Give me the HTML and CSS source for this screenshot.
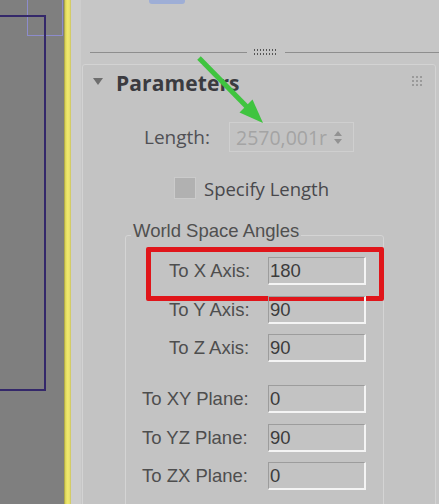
FILE: index.html
```html
<!DOCTYPE html>
<html>
<head>
<meta charset="utf-8">
<link rel="stylesheet" href="styles.css">
</head>
<body>
<div class="viewport">
  <div class="hover-box"></div>
  <div class="sel-box"></div>
</div>
<div class="divider"></div>
<div class="panel">
  <div class="strip"></div>
  <div class="main">
    <div class="top">
      <div class="blue-btn"></div>
      <div class="sep">
        <div class="sep-line short"></div>
        <div class="sep-grip"><div class="dots"></div><div class="dots"></div></div>
        <div class="sep-line"></div>
      </div>
    </div>
    <div class="rollout">
      <div class="ro-head">
        <div class="tri"></div>
        <div class="ro-title">Parameters</div>
        <div class="ro-grip">
          <span></span><span></span><span></span>
          <span></span><span></span><span></span>
          <span></span><span></span><span></span>
        </div>
      </div>
      <div class="len-row">
        <div class="len-label">Length:</div>
        <div class="spinner">
          <span class="spin-val">2570,001r</span>
          <span class="spin-arrows"><span class="up"></span><span class="down"></span></span>
        </div>
      </div>
      <div class="chk-row">
        <div class="chk"></div>
        <div class="chk-label">Specify Length</div>
      </div>
      <fieldset class="group">
        <legend>World Space Angles</legend>
        <div class="rows axis">
          <div class="row hl"><div class="lbl">To X Axis:</div><div class="box">180</div><div class="red-mark"></div></div>
          <div class="row"><div class="lbl">To Y Axis:</div><div class="box">90</div></div>
          <div class="row"><div class="lbl">To Z Axis:</div><div class="box">90</div></div>
        </div>
        <div class="rows plane">
          <div class="row"><div class="lbl">To XY Plane:</div><div class="box">0</div></div>
          <div class="row"><div class="lbl">To YZ Plane:</div><div class="box">90</div></div>
          <div class="row"><div class="lbl">To ZX Plane:</div><div class="box">0</div></div>
        </div>
      </fieldset>
    </div>
  </div>
</div>
<svg class="arrow" width="439" height="504" viewBox="0 0 439 504">
  <line x1="199" y1="58" x2="248" y2="108" stroke="#3fc43f" stroke-width="5"/>
  <polygon points="263,123 239.5,112.5 252.5,99.5" fill="#3fc43f"/>
</svg>
</body>
</html>
```
FILE: styles.css
```css
html, body {
  margin: 0;
  padding: 0;
}
body {
  width: 439px;
  height: 504px;
  overflow: hidden;
  display: flex;
  position: relative;
  font-family: "Liberation Sans", Arial, sans-serif;
  background: #c5c5c5;
}
.viewport {
  width: 64px;
  flex: none;
  background: #7f7f7f;
  position: relative;
  overflow: hidden;
}
.hover-box {
  position: absolute;
  left: 27px;
  top: -4px;
  width: 34px;
  height: 38px;
  border: 1px solid #8d8ccc;
}
.sel-box {
  position: absolute;
  left: -4px;
  top: 15px;
  width: 46px;
  height: 372px;
  border: 2px solid #34286a;
}
.divider {
  width: 7px;
  flex: none;
  background: linear-gradient(to right, #9a9440 0, #d9d25a 20%, #efe86c 45%, #ece46a 75%, #c9c267 100%);
}
.panel {
  flex: 1;
  display: flex;
}
.strip {
  width: 10px;
  flex: none;
  background: #cdcdcd;
}
.main {
  flex: 1;
  display: flex;
  flex-direction: column;
  background: #c6c6c6;
}
.top {
  height: 64px;
  flex: none;
  display: flex;
  flex-direction: column;
}
.blue-btn {
  margin-left: 68px;
  width: 36px;
  height: 4px;
  background: #9eaed6;
  border-radius: 0 0 3px 3px;
}
.sep {
  margin-top: 45px;
  height: 6px;
  display: flex;
  align-items: center;
  padding-left: 9px;
}
.sep-line {
  flex: 1;
  height: 1px;
  background: #8e8e8e;
}
.sep-line.short {
  flex: none;
  width: 157px;
}
.sep-grip {
  width: 24px;
  margin: 0 7px;
  display: flex;
  flex-direction: column;
  gap: 2px;
}
.dots {
  height: 2px;
  background-image: linear-gradient(90deg, #555 0, #555 1.5px, transparent 1.5px);
  background-size: 3px 2px;
}
.rollout {
  flex: 1;
  margin: 0 3px 0 1px;
  border: 1px solid #d3d3d3;
  border-radius: 3px;
  background: #c3c3c3;
  display: flex;
  flex-direction: column;
}
.ro-head {
  height: 36px;
  flex: none;
  display: flex;
  align-items: center;
  padding-left: 10px;
}
.tri {
  width: 0;
  height: 0;
  border-left: 5px solid transparent;
  border-right: 5px solid transparent;
  border-top: 7px solid #6e6e6e;
  margin-top: -3px;
}
.ro-title {
  margin-left: 13px;
  font-family: "Open Sans", sans-serif;
  font-weight: bold;
  font-size: 21px;
  color: #3b3b40;
  letter-spacing: 0.1px;
}
.ro-grip {
  margin-left: auto;
  margin-right: 13px;
  margin-top: -4px;
  display: grid;
  grid-template-columns: repeat(3, 2px);
  grid-auto-rows: 2px;
  gap: 2px;
}
.ro-grip span {
  background: #9a9a9a;
}
.len-row {
  margin-top: 21px;
  height: 30px;
  display: flex;
  align-items: center;
  padding-left: 61px;
}
.len-label {
  width: 85px;
  font-family: "Open Sans", sans-serif;
  font-size: 19px;
  color: #505055;
}
.spinner {
  width: 117px;
  height: 28px;
  border: 1px solid #cfcfcf;
  display: flex;
  align-items: center;
  padding-left: 6px;
  box-sizing: content-box;
  overflow: hidden;
}
.spin-val {
  font-family: "Open Sans", sans-serif;
  font-size: 19.5px;
  color: #a4a4a4;
  width: 96px;
  white-space: nowrap;
  overflow: hidden;
}
.spin-arrows {
  display: flex;
  flex-direction: column;
  gap: 3px;
  margin-left: 2px;
}
.spin-arrows .up {
  width: 0; height: 0;
  border-left: 4px solid transparent;
  border-right: 4px solid transparent;
  border-bottom: 5px solid #929292;
}
.spin-arrows .down {
  width: 0; height: 0;
  border-left: 4px solid transparent;
  border-right: 4px solid transparent;
  border-top: 5px solid #929292;
}
.chk-row {
  margin-top: 25px;
  height: 22px;
  display: flex;
  align-items: center;
  padding-left: 91px;
}
.chk {
  width: 20px;
  height: 20px;
  background: #b1b1b1;
  border: 1px solid #cbcbcb;
}
.chk-label {
  margin-left: 8px;
  font-family: "Open Sans", sans-serif;
  font-size: 18.5px;
  color: #48484c;
}
.group {
  margin: 22px 0 0 42px;
  padding: 0 0 20px 0;
  width: 257px;
  border: 1px solid #d4d4d4;
  border-radius: 3px;
  min-width: 0;
}
.group legend {
  margin-left: 5px;
  padding: 0 2px 8px 2px;
  font-size: 18.5px;
  line-height: 20px;
  color: #505050;
}
.rows {
  display: flex;
  flex-direction: column;
  gap: 10.5px;
}
.rows.axis {
  margin-top: 8px;
}
.rows.plane {
  margin-top: 23px;
}
.row {
  height: 28px;
  display: flex;
  align-items: center;
  position: relative;
}
.axis .lbl {
  padding-left: 43px;
}
.plane .lbl {
  padding-left: 16px;
}
.lbl {
  width: 142px;
  box-sizing: border-box;
  font-size: 18.5px;
  color: #4e4e4e;
  white-space: nowrap;
}
.box {
  width: 94px;
  height: 25px;
  border-top: 1px solid #9c9c9c;
  border-left: 1px solid #9c9c9c;
  border-right: 2px solid #f4f4f4;
  border-bottom: 2px solid #f4f4f4;
  font-size: 18.5px;
  line-height: 25px;
  color: #3c3c3c;
  padding-left: 1px;
  box-sizing: content-box;
}
.red-mark {
  position: absolute;
  left: 20px;
  top: -10px;
  width: 228px;
  height: 44px;
  border: 5px solid #e0151a;
  border-radius: 2px;
}
.arrow {
  position: absolute;
  left: 0;
  top: 0;
  pointer-events: none;
}
```
